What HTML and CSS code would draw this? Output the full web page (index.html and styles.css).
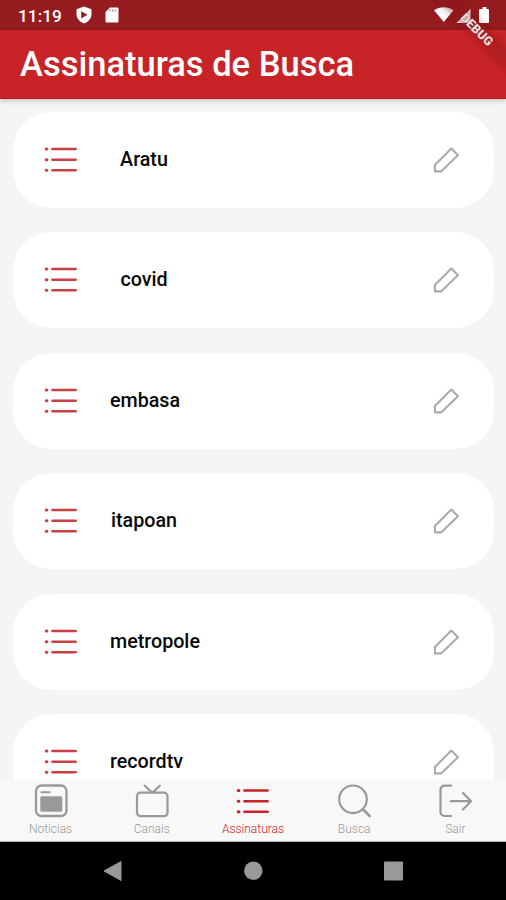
FILE: index.html
```html
<!DOCTYPE html>
<html lang="pt-BR">
<head>
<meta charset="utf-8">
<title>Assinaturas de Busca</title>
<link rel="stylesheet" href="styles.css">
</head>
<body>
<svg class="defs" aria-hidden="true">
  <symbol id="list" viewBox="0 0 34 28">
    <path d="M8.400 2.9H31.700M8.400 13.7H31.700M8.400 24.300H31.700" fill="none" stroke="currentColor" stroke-width="2.500" stroke-linecap="round"/>
    <path d="M2.200 2.900H2.900M2.200 13.700H2.900M2.200 24.300H2.900" fill="none" stroke="currentColor" stroke-width="3" stroke-linecap="round"/>
  </symbol>
  <symbol id="pencil" viewBox="0 0 28 28">
    <path d="M19.300 2.600 26 9.300 9 25.400H2.900V19Z" fill="none" stroke="currentColor" stroke-width="2.100" stroke-linejoin="round"/>
  </symbol>
</svg>
<div class="screen">
  <header class="status">
    <span class="time">11:19</span>
    <svg class="shield" viewBox="0 0 16 18"><path d="M8 .5 15.5 3.2V8c0 4.500-3 7.800-7.500 9.500C3.500 15.800.5 12.500.5 8V3.200Z" fill="#fff"/><path d="M5.200 5.200 11.500 8.800 5.200 12.400Z" fill="#951b1e"/></svg>
    <svg class="sd" viewBox="0 0 14 16"><path d="M5 .5h7.500a1 1 0 0 1 1 1v13a1 1 0 0 1-1 1h-11a1 1 0 0 1-1-1V5Z" fill="#fff"/><path d="M5 2.500v2M7.700 2.500v2M10.400 2.500v2" stroke="#951b1e" stroke-opacity=".6" stroke-width="1.200"/></svg>
    <svg class="signals" viewBox="0 0 56 18"><path d="M0 4.300C5.500.200 14 .200 19.500 4.300L9.800 16Z" fill="#fff"/><path d="M22.500 17 36.500 3V17Z" fill="#fff"/><path d="M46 3h2.500V1h4v2h1.500a1 1 0 0 1 1 1v12a1 1 0 0 1-1 1h-8a1 1 0 0 1-1-1V4a1 1 0 0 1 1-1Z" fill="#fff"/></svg>
  </header>
  <h1 class="appbar">Assinaturas de Busca</h1>
  <main class="list">
    <article class="card"><svg class="list-icon"><use href="#list"/></svg><span class="name">Aratu</span><svg class="pencil"><use href="#pencil"/></svg></article>
    <article class="card"><svg class="list-icon"><use href="#list"/></svg><span class="name">covid</span><svg class="pencil"><use href="#pencil"/></svg></article>
    <article class="card"><svg class="list-icon"><use href="#list"/></svg><span class="name">embasa</span><svg class="pencil"><use href="#pencil"/></svg></article>
    <article class="card"><svg class="list-icon"><use href="#list"/></svg><span class="name">itapoan</span><svg class="pencil"><use href="#pencil"/></svg></article>
    <article class="card"><svg class="list-icon"><use href="#list"/></svg><span class="name">metropole</span><svg class="pencil"><use href="#pencil"/></svg></article>
    <article class="card"><svg class="list-icon"><use href="#list"/></svg><span class="name">recordtv</span><svg class="pencil"><use href="#pencil"/></svg></article>
  </main>
  <nav class="tabs">
    <div class="tab"><svg class="tab-icon" viewBox="0 0 34 34"><rect x="2" y="1.500" width="30.500" height="30.500" rx="5.500" fill="none" stroke="currentColor" stroke-width="2.300"/><path d="M7.500 8.200h8" stroke="currentColor" stroke-width="2" stroke-linecap="round"/><rect x="6.300" y="12.300" width="22" height="15.500" rx="1.500" fill="currentColor"/></svg><span>Noticias</span></div>
    <div class="tab"><svg class="tab-icon" viewBox="0 0 34 34"><rect x="2" y="8.700" width="30.500" height="23.500" rx="3.500" fill="none" stroke="currentColor" stroke-width="2.200"/><path d="M9.800 1.700 17.300 8.700 24.900 1.700" fill="none" stroke="currentColor" stroke-width="2.200" stroke-linecap="round"/></svg><span>Canais</span></div>
    <div class="tab active"><svg class="tab-icon" viewBox="0 -3.500 34 34"><use href="#list" width="34" height="28"/></svg><span>Assinaturas</span></div>
    <div class="tab"><svg class="tab-icon" viewBox="0 0 34 34"><circle cx="16" cy="15.300" r="13.800" fill="none" stroke="currentColor" stroke-width="2.200"/><path d="m25.700 25 7 7" stroke="currentColor" stroke-width="2.500" stroke-linecap="round"/></svg><span>Busca</span></div>
    <div class="tab"><svg class="tab-icon" viewBox="0 0 34 34"><path d="M13 1.700H6.500a4 4 0 0 0-4 4V28a4 4 0 0 0 4 4H13M13 17.200H33M25 9l8 8.200L25 25.400" fill="none" stroke="currentColor" stroke-width="2.200" stroke-linecap="round" stroke-linejoin="round"/></svg><span>Sair</span></div>
  </nav>
  <footer class="system">
    <svg viewBox="0 0 20 22"><path d="M18 1.500V20.500L1 11Z" fill="currentColor" stroke="currentColor" stroke-linejoin="round"/></svg>
    <svg viewBox="0 0 20 22"><circle cx="10.300" cy="10.700" r="9.200" fill="currentColor"/></svg>
    <svg viewBox="0 0 20 22"><rect x="1" y="1.500" width="19" height="19" rx="1" fill="currentColor"/></svg>
  </footer>
  <div class="debug"><span>DEBUG</span></div>
</div>
</body>
</html>
```
FILE: styles.css
```css
* { box-sizing: border-box; }
body { margin: 0; font-family: Roboto, sans-serif; }
svg { display: block; flex: none; }
.defs { position: absolute; width: 0; height: 0; }
.screen {
  position: relative;
  width: 506px;
  height: 900px;
  overflow: hidden;
  display: flex;
  flex-direction: column;
  background: #f5f5f5;
}
.status {
  position: relative;
  flex: none;
  height: 30px;
  padding: 0 16px 0 18px;
  display: flex;
  align-items: center;
  background: #951b1e;
  color: #fff;
}
.time { width: 58px; font-size: 17.3px; font-weight: 500; line-height: 20px; padding-top: 2px; }
.shield { width: 16px; height: 18px; }
.sd { width: 14px; height: 16px; margin-left: 13px; }
.signals { position: relative; width: 56px; height: 18px; margin-left: auto; }
.appbar {
  position: relative;
  flex: none;
  height: 69px;
  margin: 0;
  padding: 0 20px;
  background: #c82428;
  border-bottom: 1px solid #bc1418;
  box-shadow: 0 2px 5px rgba(0, 0, 0, .2);
  color: #fff;
  font-size: 34.5px;
  font-weight: 500;
  line-height: 69px;
  white-space: nowrap;
}
.list {
  flex: 1;
  min-height: 0;
  overflow: hidden;
  padding: 12.500px 12px 0 13px;
  display: flex;
  flex-direction: column;
  gap: 24.600px;
}
.card {
  flex: none;
  height: 96px;
  padding: 0 34px 0 31px;
  display: flex;
  align-items: center;
  border-radius: 38px;
  background: #fff;
}
.list-icon { width: 34px; height: 28px; color: #cc3f42; }
.name {
  min-width: 68px;
  margin-left: 32px;
  text-align: center;
  font-size: 19.700px;
  font-weight: 500;
  line-height: 24px;
  color: #080808;
}
.pencil { width: 28px; height: 28px; margin-left: auto; color: #aaa; }
.tabs {
  flex: none;
  height: 62px;
  display: grid;
  grid-template-columns: repeat(5, 1fr);
  background: #f8f8f8;
  border-bottom: 1px solid #b5b5b5;
}
.tab {
  display: flex;
  flex-direction: column;
  align-items: center;
  padding-top: 4px;
  color: #999;
  font-size: 12px;
  font-weight: 300;
  line-height: 14px;
}
.tab span { margin-top: 4px; }
.tab-icon { width: 34px; height: 34px; }
.active { color: #c82428; }
.system {
  flex: none;
  height: 58px;
  padding: 0 103px;
  display: flex;
  align-items: center;
  justify-content: space-between;
  background: #000;
  color: #999;
}
.system svg { width: 20px; height: 22px; }
.debug {
  position: absolute;
  top: 0;
  right: 0;
  width: 74px;
  height: 80px;
  overflow: hidden;
}
.debug span {
  position: absolute;
  left: -15px;
  top: 22px;
  width: 120px;
  height: 15px;
  transform: rotate(45deg);
  background: rgba(125, 20, 23, .3);
  box-shadow: 0 0 8px rgba(100, 0, 0, .3);
  color: #f0dada;
  text-align: center;
  font-size: 12.500px;
  font-weight: 900;
  line-height: 15px;
  text-shadow: 0 0 1px #64292b;
}
```
